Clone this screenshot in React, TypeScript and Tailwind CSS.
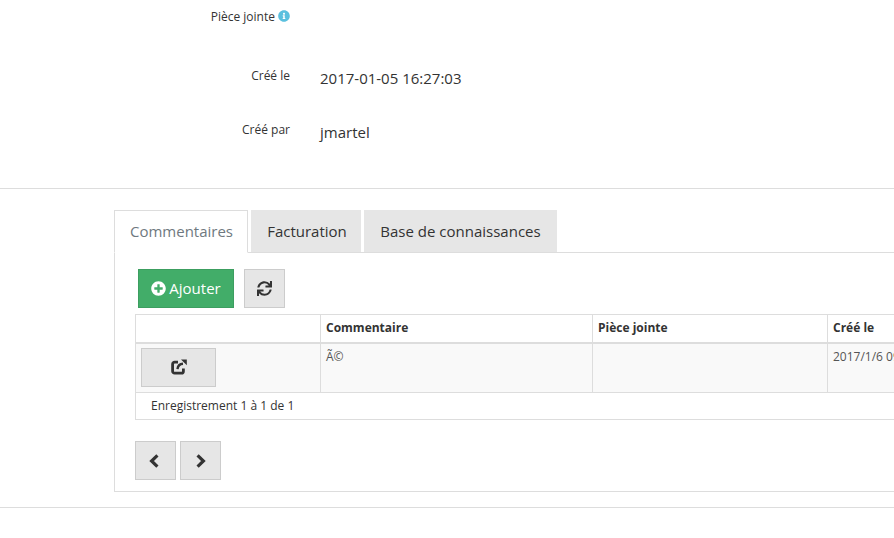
import React from 'react';
import { FaInfoCircle, FaPlusCircle, FaSync } from 'react-icons/fa';

const FormRow = ({ label, value, className }: { label: React.ReactNode; value?: string; className: string }) => (
  <div className={`flex items-start ${className}`}>
    <div className="w-[290px] text-right text-[12px] leading-[17px] text-[#333]">{label}</div>
    <div className="ml-[30px] mt-[1px] text-[15px] leading-[20px] text-[#333]">{value}</div>
  </div>
);

const OpenIcon = () => (
  <svg width="16" height="16" viewBox="0 0 16 16" fill="none" stroke="#333" strokeWidth="2.8">
    <path d="M7 3.2H3.6A2 2 0 0 0 1.6 5.2v7a2 2 0 0 0 2 2h6.8a2 2 0 0 0 2-2V9.5" />
    <path d="M6.5 10.2C6.8 7 8.8 5 12 4.8" strokeWidth="2.4" />
    <path d="M10 0.4h5.8v5.8z" fill="#333" stroke="none" />
  </svg>
);

const Chevron = ({ dir }: { dir: 'left' | 'right' }) => (
  <svg width="10" height="14" viewBox="0 0 10 14" fill="none" stroke="#333" strokeWidth="3.2">
    <path d={dir === 'left' ? 'M8.4 1.4 2.6 7l5.8 5.6' : 'M1.6 1.4 7.4 7l-5.8 5.6'} />
  </svg>
);

const App = () => {
  return (
    <div className="w-[894px] h-[538px] overflow-hidden bg-white text-[#333] font-['Open_Sans',sans-serif]">
      {/* Form fields */}
      <div className="h-[188px] border-b border-[#ddd] box-content">
        <FormRow
          className="pt-[8px]"
          label={
            <span className="inline-flex items-center justify-end gap-[3px]">
              Pièce jointe <FaInfoCircle className="text-[#5bc0de] text-[12px] -mt-[2px]" />
            </span>
          }
        />
        <FormRow className="mt-[42px]" label="Créé le" value="2017-01-05 16:27:03" />
        <FormRow className="mt-[33px]" label="Créé par" value="jmartel" />
      </div>

      {/* Tabs */}
      <div className="ml-[114px] mt-[21px] w-[800px]">
        <div className="flex h-[43px] gap-[3px] border-b border-[#ddd]">
          <div className="w-[134px] h-[43px] flex items-center justify-center pl-[1px] bg-white border border-[#ddd] border-b-white text-[15px] text-[#6f7980]">
            Commentaires
          </div>
          <div className="w-[110px] h-[42px] flex items-center justify-center pl-[2px] bg-[#e6e6e6] text-[15px] text-[#333]">
            Facturation
          </div>
          <div className="w-[193px] h-[42px] flex items-center justify-center bg-[#e6e6e6] text-[15px] text-[#333]">
            Base de connaissances
          </div>
        </div>

        <div className="h-[239px] border-l border-b border-[#ddd] pl-[20px] pt-[16px]">
          <div className="flex gap-[10px] ml-[3px]">
            <button className="w-[96px] h-[39px] flex items-center justify-center gap-[3px] bg-[#42ad69] border border-[#3c9e60] text-white text-[15px]">
              <FaPlusCircle className="text-[15px]" />
              Ajouter
            </button>
            <button className="w-[41px] h-[39px] flex items-center justify-center bg-[#e6e6e6] border border-[#ccc] text-[#333]">
              <FaSync className="text-[15px]" />
            </button>
          </div>

          <table className="mt-[6px] w-[800px] table-fixed border-collapse border border-[#ddd] text-[12px] leading-[17px]">
            <colgroup>
              <col className="w-[185px]" />
              <col className="w-[272px]" />
              <col className="w-[235px]" />
              <col />
            </colgroup>
            <thead>
              <tr className="h-[28px] border-b-2 border-[#ddd] font-bold text-left">
                <th className="px-[4px] border-r border-[#ddd]"></th>
                <th className="px-[5px] pb-[1px] border-r border-[#ddd]">Commentaire</th>
                <th className="px-[5px] pb-[1px] border-r border-[#ddd]">Pièce jointe</th>
                <th className="px-[5px] pb-[1px]">Créé le</th>
              </tr>
            </thead>
            <tbody>
              <tr className="h-[50px] bg-[#f9f9f9] border-b border-[#ddd] align-top">
                <td className="pl-[5px] pt-[4px] border-r border-[#ddd]">
                  <button className="w-[75px] h-[39px] flex items-center justify-center bg-[#e6e6e6] border border-[#ccc]">
                    <OpenIcon />
                  </button>
                </td>
                <td className="px-[5px] pt-[4px] border-r border-[#ddd] text-[#555]">Ã©</td>
                <td className="px-[5px] pt-[4px] border-r border-[#ddd]"></td>
                <td className="px-[5px] pt-[4px] whitespace-nowrap text-[#555]">2017/1/6 09:12:44</td>
              </tr>
              <tr className="h-[27px]">
                <td colSpan={4} className="pl-[15px] pb-[2px]">
                  Enregistrement 1 à 1 de 1
                </td>
              </tr>
            </tbody>
          </table>

          <div className="flex gap-[4px] mt-[21px]">
            <button className="w-[41px] h-[39px] flex items-center justify-center pr-[3px] bg-[#e6e6e6] border border-[#ccc]">
              <Chevron dir="left" />
            </button>
            <button className="w-[41px] h-[39px] flex items-center justify-center bg-[#e6e6e6] border border-[#ccc]">
              <Chevron dir="right" />
            </button>
          </div>
        </div>
      </div>

      <div className="mt-[15px] border-t border-[#ddd]"></div>
    </div>
  );
};

export default App;
